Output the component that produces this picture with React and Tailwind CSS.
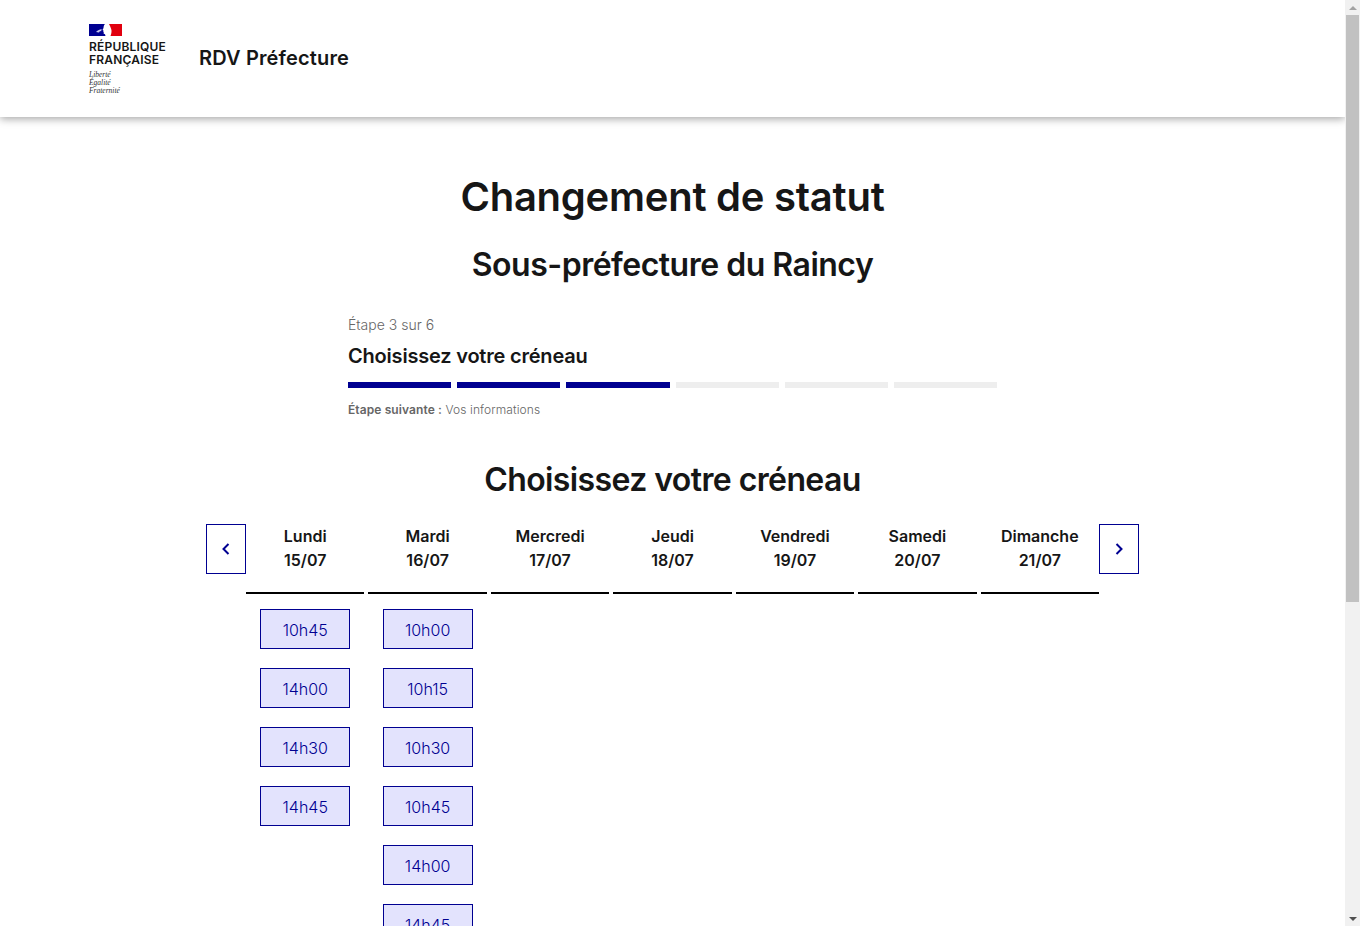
const days = [
  { name: 'Lundi', date: '15/07', slots: ['10h45', '14h00', '14h30', '14h45'] },
  { name: 'Mardi', date: '16/07', slots: ['10h00', '10h15', '10h30', '10h45', '14h00', '14h45'] },
  { name: 'Mercredi', date: '17/07', slots: [] },
  { name: 'Jeudi', date: '18/07', slots: [] },
  { name: 'Vendredi', date: '19/07', slots: [] },
  { name: 'Samedi', date: '20/07', slots: [] },
  { name: 'Dimanche', date: '21/07', slots: [] },
];

function Logo() {
  return (
    <div className="flex flex-col w-[78px] mt-[2px]">
      <svg width="33" height="12" viewBox="0 0 33 12" className="shrink-0">
        <rect width="33" height="12" fill="#fff" />
        <path d="M0 0h16c-1 1-1.500 2.500-1.500 4L13.500 6l1 .5-.2 1.500.6.500-.4 1 1.500.8.500 1.700H0z" fill="#000091" />
        <path d="M20 0h13v12H21.500c1-3 1.500-5 .5-7.500C21.500 3 20.800 1.500 20 0z" fill="#e1000f" />
        <path d="M7 8c1-1.300 2.500-2.200 4-2.600L13 5l-1 1.200.8.800-2 .3-.8 1.200-1.500-.3z" fill="#c9c9ec" />
      </svg>
      <div className="mt-[4px] text-[12px] leading-[13px] font-semibold text-[#161616] tracking-[0.2px]">RÉPUBLIQUE<br />FRANÇAISE</div>
      <div className="mt-[5px] font-['Liberation_Serif',serif] italic text-[7.5px] leading-[8px] text-[#333]">Liberté<br />Égalité<br />Fraternité</div>
    </div>
  );
}

function Chevron({ dir }) {
  return (
    <svg width="12" height="14" viewBox="0 0 12 14" fill="none" stroke="#000091" strokeWidth="2">
      <path d={dir === 'left' ? 'M8.500 2 3.500 7l5 5' : 'M3.500 2l5 5-5 5'} />
    </svg>
  );
}

function ArrowButton({ dir }) {
  return (
    <button className="w-10 h-[50px] shrink-0 border border-[#000091] bg-white flex items-center justify-center">
      <Chevron dir={dir} />
    </button>
  );
}

function Scrollbar() {
  return (
    <div className="w-[15px] shrink-0 h-full bg-[#f1f1f1] flex flex-col items-center">
      <div className="h-[15px] shrink-0 flex items-center justify-center">
        <div className="w-0 h-0 border-x-[4px] border-x-transparent border-b-[4px] border-b-[#a3a3a3]" />
      </div>
      <div className="w-[13px] h-[587px] bg-[#c1c1c1]" />
      <div className="flex-1" />
      <div className="h-[15px] shrink-0 flex items-center justify-center">
        <div className="w-0 h-0 border-x-[4px] border-x-transparent border-t-[4px] border-t-[#505050]" />
      </div>
    </div>
  );
}

export default function App() {
  return (
    <div className="flex h-[926px] overflow-hidden bg-white font-['Inter',sans-serif] text-[#161616]">
      <div className="flex-1 min-w-0 h-full overflow-hidden">
        {/* Header */}
        <header className="h-[117px] flex items-center pl-[89px] shadow-[0_2px_8px_rgba(0,0,0,0.35)]">
          <Logo />
          <div className="ml-[32px] mb-[2px] text-[20px] font-semibold tracking-[0.15px]">RDV Préfecture</div>
        </header>

        {/* Titles */}
        <h1 className="mt-[56px] text-center text-[40px] leading-[48px] font-semibold tracking-[-0.25px]">Changement de statut</h1>
        <h2 className="mt-[24px] text-center text-[32px] leading-[40px] font-semibold tracking-[-0.5px]">Sous-préfecture du Raincy</h2>

        {/* Stepper */}
        <div className="mt-[28px] ml-[348px] w-[649px]">
          <div className="text-[14px] leading-[24px] text-[#666] font-light">Étape 3 sur 6</div>
          <div className="mt-[5px] text-[20px] leading-[28px] font-semibold tracking-[-0.2px]">Choisissez votre créneau</div>
          <div className="mt-[12px] flex gap-[6px]">
            {[0, 1, 2, 3, 4, 5].map(i => (
              <div key={i} className={`flex-1 h-[6px] ${i < 3 ? 'bg-[#000091]' : 'bg-[#eeeeee]'}`} />
            ))}
          </div>
          <div className="mt-[12px] text-[12px] leading-[20px] text-[#666] tracking-[0.1px]">
            <b className="font-semibold">Étape suivante :</b> <span className="font-light">Vos informations</span>
          </div>
        </div>

        <h2 className="mt-[40px] text-center text-[32px] leading-[40px] font-semibold tracking-[-0.6px]">Choisissez votre créneau</h2>

        {/* Calendar */}
        <div className="mt-[24px] ml-[206px] w-[933px] flex items-start">
          <ArrowButton dir="left" />
          <div className="flex-1 grid grid-cols-7 gap-x-[4px]">
            {days.map(day => (
              <div key={day.name} className="flex flex-col items-center">
                <div className="w-full h-[70px] border-b-2 border-black text-center text-[16px] leading-[24px] font-semibold pb-[20px]">
                  <div>{day.name}</div>
                  <div>{day.date}</div>
                </div>
                <div className="mt-[15px] flex flex-col gap-[19px]">
                  {day.slots.map(slot => (
                    <button key={slot} className="w-[90px] h-[40px] shrink-0 pt-[1px] border border-[#000091] bg-[#e3e3fd] text-[#000091] text-[16px] font-light">
                      {slot}
                    </button>
                  ))}
                </div>
              </div>
            ))}
          </div>
          <ArrowButton dir="right" />
        </div>
      </div>
      <Scrollbar />
    </div>
  );
}
